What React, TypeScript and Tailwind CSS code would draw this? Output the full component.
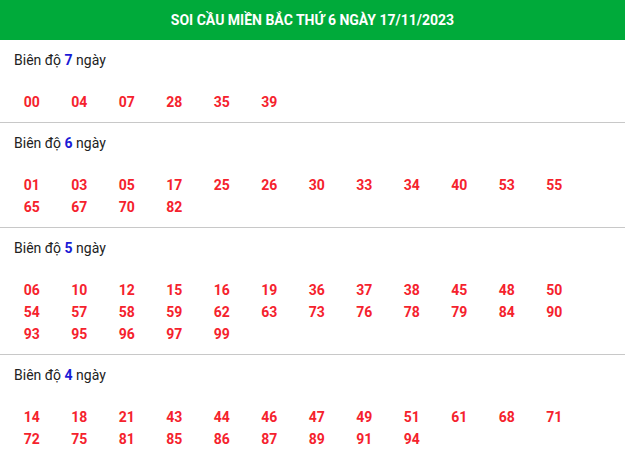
const sections: { days: number; numbers: string[] }[] = [
  { days: 7, numbers: ['00', '04', '07', '28', '35', '39'] },
  {
    days: 6,
    numbers: ['01', '03', '05', '17', '25', '26', '30', '33', '34', '40', '53', '55', '65', '67', '70', '82'],
  },
  {
    days: 5,
    numbers: [
      '06', '10', '12', '15', '16', '19', '36', '37', '38', '45', '48', '50',
      '54', '57', '58', '59', '62', '63', '73', '76', '78', '79', '84', '90',
      '93', '95', '96', '97', '99',
    ],
  },
  {
    days: 4,
    numbers: ['14', '18', '21', '43', '44', '46', '47', '49', '51', '61', '68', '71', '72', '75', '81', '85', '86', '87', '89', '91', '94'],
  },
];

export default function App() {
  return (
    <div className="w-[625px] bg-white font-['Roboto',sans-serif] text-[14px] text-[#222]">
      {/* Header */}
      <div className="h-10 bg-[#00aa3a] flex items-center justify-center">
        <h2 className="text-white font-bold text-[14px] uppercase">
          Soi cầu miền Bắc thứ 6 ngày 17/11/2023
        </h2>
      </div>

      {sections.map((s) => (
        <div key={s.days} className="border-b border-[#c8c8c8] pt-[10px] pb-[9px]">
          <p className="px-[14px] leading-[21px]">
            Biên độ <span className="font-bold text-[#1a1ad6]">{s.days}</span> ngày
          </p>
          <div className="mt-5 px-2 grid grid-cols-12 w-[586px]">
            {s.numbers.map((n) => (
              <span key={n} className="text-center font-bold text-[#f5222d] leading-[22px]">
                {n}
              </span>
            ))}
          </div>
        </div>
      ))}
    </div>
  );
}
